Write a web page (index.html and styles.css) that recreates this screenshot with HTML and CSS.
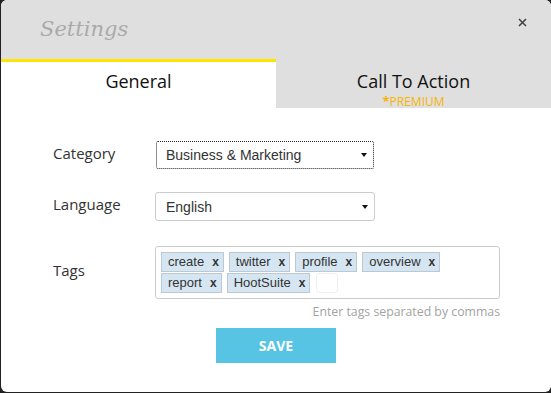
FILE: index.html
```html
<!DOCTYPE html>
<html>
<head>
<meta charset="utf-8">
<link rel="stylesheet" href="styles.css">
</head>
<body>
<div class="modal">
  <div class="header">
    <h1 class="title">Settings</h1>
    <svg class="close" width="9" height="9" viewBox="0 0 9 9"><path d="M1 1L8 8M8 1L1 8" stroke="#444" stroke-width="1.6"/></svg>
  </div>
  <div class="tabs">
    <div class="tab active">General</div>
    <div class="tab">Call To Action<div class="premium"><span class="star">*</span>PREMIUM</div></div>
  </div>
  <div class="form">
    <div class="row">
      <div class="label">Category</div>
      <div class="select focused"><span>Business &amp; Marketing</span><i class="caret"></i></div>
    </div>
    <div class="row row-lang">
      <div class="label">Language</div>
      <div class="select"><span>English</span><i class="caret"></i></div>
    </div>
    <div class="row row-tags">
      <div class="label">Tags</div>
      <div class="tagbox">
        <span class="tag">create<b>x</b></span><span class="tag">twitter<b>x</b></span><span class="tag">profile<b>x</b></span><span class="tag">overview<b>x</b></span><span class="tag">report<b>x</b></span><span class="tag">HootSuite<b>x</b></span><span class="tag-input"></span>
      </div>
    </div>
    <div class="hint">Enter tags separated by commas</div>
    <div class="actions"><button class="save">SAVE</button></div>
  </div>
</div>
</body>
</html>
```
FILE: styles.css
```css
html, body { margin: 0; padding: 0; }
body {
  background: #222;
  width: 551px;
  height: 393px;
  overflow: hidden;
  font-family: "Open Sans", "DejaVu Sans", sans-serif;
}
.modal {
  margin-left: 1px;
  width: 550px;
  height: 392px;
  background: #fff;
  border-radius: 6px;
  overflow: hidden;
}
.header {
  height: 59px;
  background: #dfdfdf;
  display: flex;
  justify-content: space-between;
  align-items: flex-start;
  box-sizing: border-box;
  padding-left: 39px;
}
.title {
  margin: 0;
  padding-top: 15px;
  font-family: "DejaVu Serif", serif;
  font-style: italic;
  font-weight: normal;
  font-size: 21px;
  line-height: 28px;
  color: #aaa;
}
.close { margin-top: 18px; margin-right: 24px; }
.tabs {
  display: grid;
  grid-template-columns: 275px 275px;
  height: 49px;
}
.tab {
  background: #dfdfdf;
  border-top: 3px solid transparent;
  text-align: center;
  font-size: 18px;
  line-height: 24px;
  padding-top: 7px;
  color: #111;
}
.tab.active {
  background: #fff;
  border-top-color: #ffe400;
}
.premium {
  font-size: 12px;
  line-height: 12px;
  color: #f7b500;
  margin-top: 2px;
}
.star { font-size: 13px; line-height: 12px; font-weight: bold; }
.form {
  padding: 33px 0 0 52px;
}
.row {
  display: flex;
  align-items: center;
}
.row-lang { margin-top: 23px; }
.row-tags { margin-top: 25px; }
.label {
  width: 102px;
  font-size: 15px;
  line-height: 20px;
  padding-bottom: 5px;
  color: #333;
}
.select {
  box-sizing: border-box;
  width: 220px;
  height: 29px;
  border: 1px solid #ccc;
  border-radius: 3px;
  display: flex;
  align-items: center;
  justify-content: space-between;
  padding: 0 6px 0 10px;
  font-family: "Liberation Sans", Arial, sans-serif;
  font-size: 14px;
  color: #333;
}
.select.focused {
  margin-left: 1px;
  width: 218px;
  height: 28px;
  border: 1px dotted #222;
  border-radius: 2px;
  padding-left: 9px;
}
.caret {
  width: 0;
  height: 0;
  border-left: 3.5px solid transparent;
  border-right: 3.5px solid transparent;
  border-top: 4px solid #111;
}
.tagbox {
  box-sizing: border-box;
  width: 345px;
  height: 53px;
  border: 1px solid #ccc;
  border-radius: 3px;
  padding: 5px 4px 0 5px;
  display: flex;
  flex-wrap: wrap;
  align-content: flex-start;
  row-gap: 1px;
  column-gap: 5px;
}
.tag {
  box-sizing: border-box;
  height: 20px;
  line-height: 18px;
  background: #d5e6f2;
  border: 1px solid #bcc9d3;
  padding: 0 4px 0 6px;
  font-family: "Liberation Sans", Arial, sans-serif;
  font-size: 13px;
  color: #333;
}
.tag b {
  margin-left: 8px;
  font-size: 12px;
  color: #333;
}
.tag-input {
  width: 20px;
  height: 18px;
  margin-left: 1px;
  border: 1px solid #f0f0f0;
  border-radius: 3px;
}
.hint {
  width: 447px;
  text-align: right;
  margin-top: 3px;
  font-size: 12.3px;
  line-height: 20px;
  color: #a3a3a3;
}
.actions {
  margin-left: -52px;
  margin-top: 6px;
  display: flex;
  justify-content: center;
}
.save {
  width: 120px;
  height: 35px;
  border: 0;
  background: #56c4e2;
  color: #fff;
  font-family: "Open Sans", sans-serif;
  font-weight: bold;
  font-size: 14px;
  padding: 0;
}
```
